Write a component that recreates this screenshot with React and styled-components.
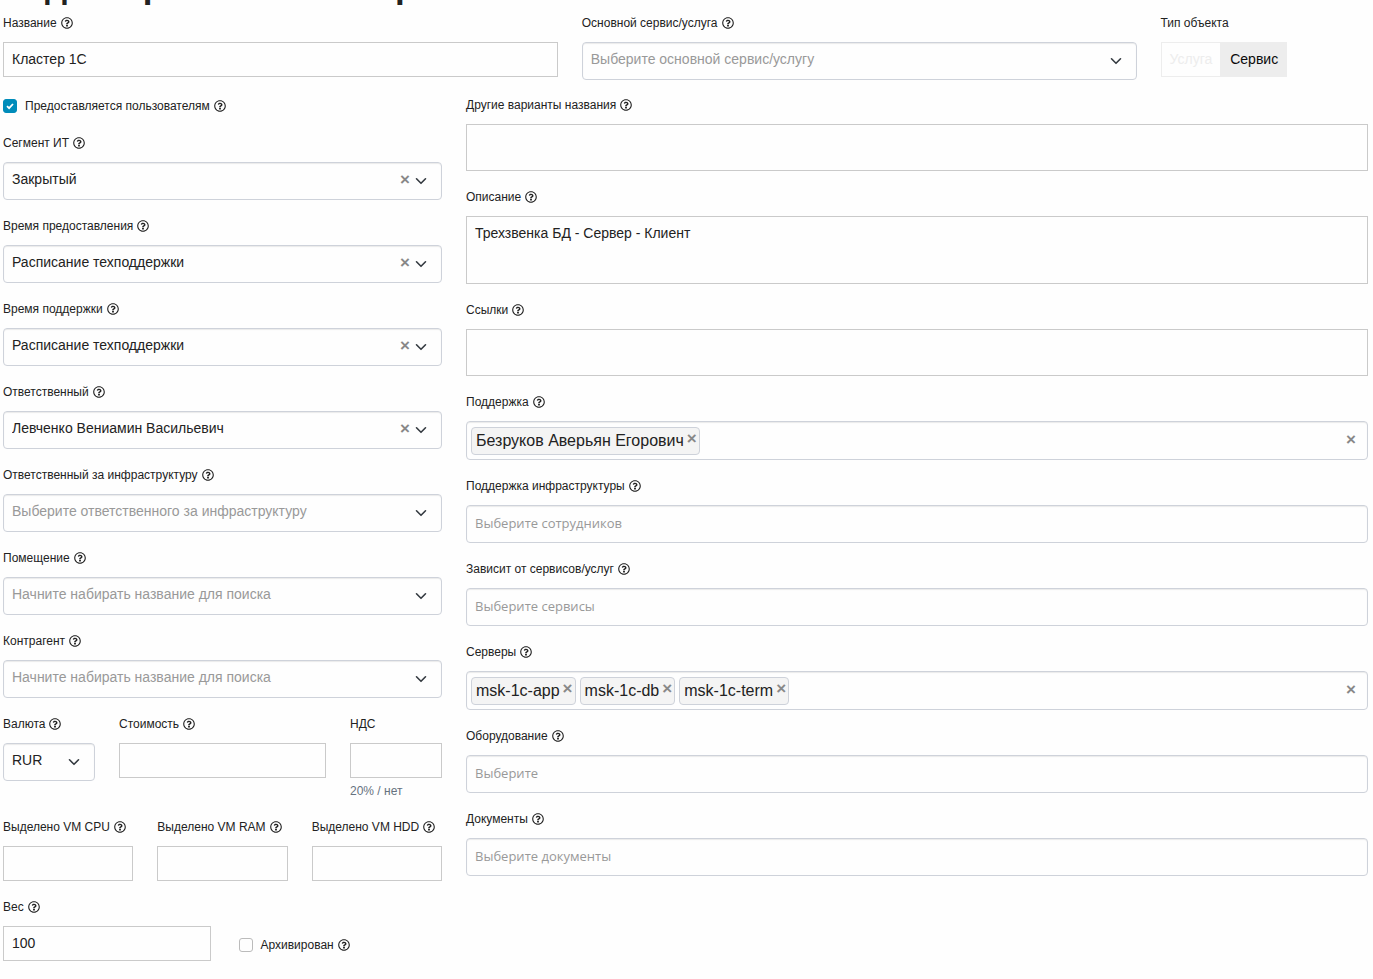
import React, { useId, useState } from "react";
import styled, { createGlobalStyle } from "styled-components";
import { FaRegQuestionCircle } from "react-icons/fa";

const GlobalStyle = createGlobalStyle`
  *, *::before, *::after {
    box-sizing: border-box;
  }
  body {
    margin: 0;
    background-color: #fefefe;
    color: #222;
    font-family: "Liberation Sans", Arial, sans-serif;
  }
  input, select, textarea, button {
    margin: 0;
    font-family: inherit;
    font-size: 14px;
    color: inherit;
  }
`;

const Page = styled.form`
  padding: 0 5px 0 3px;
  overflow: hidden;
`;

// Scrolled almost completely out of view
const Title = styled.h1`
  height: 36px;
  margin: -32px 0 10px;
  font-size: 35px;
  line-height: 36px;
  font-weight: 700;
  white-space: nowrap;
`;

//Grid
const Row = styled.div`
  display: grid;
  grid-template-columns: repeat(12, minmax(0, 1fr));
  column-gap: 24px;
  align-items: start;
  & + & {
    margin-top: 16px;
  }
`;

const Column = styled.div`
  grid-column: span ${(props) => props.$span};
  display: flex;
  flex-direction: column;
  gap: 17px;
`;

const Group = styled.div`
  display: grid;
  grid-template-columns: ${(props) => props.$columns};
  column-gap: 24px;
  align-items: start;
`;

//Field
const FieldBox = styled.div`
  display: flex;
  flex-direction: column;
  min-width: 0;
`;

const Caption = styled.div`
  display: flex;
  align-items: center;
  gap: 4px;
  height: 18px;
  margin-bottom: 10px;
  font-size: 12px;
  line-height: 18px;
  white-space: nowrap;
`;

const HelpIcon = styled(FaRegQuestionCircle)`
  flex: none;
  width: 12px;
  height: 12px;
`;

const Hint = styled.div`
  margin-top: 4px;
  font-size: 12px;
  line-height: 19px;
  color: #66727f;
`;

//Controls
const TextInput = styled.input`
  width: 100%;
  height: 35px;
  padding: 0 8px 2px;
  border: 1px solid #cacaca;
  background-color: #fefefe;
`;

const TextArea = styled.textarea`
  display: block;
  width: 100%;
  height: ${(props) => (props.$tall ? 68 : 47)}px;
  padding: 8px;
  border: 1px solid #cacaca;
  background-color: #fefefe;
  line-height: 16px;
  resize: none;
`;

const SelectBox = styled.div`
  position: relative;
`;

const NativeSelect = styled.select`
  display: block;
  appearance: none;
  width: 100%;
  height: 38px;
  padding: 0 50px 4px 8px;
  border: 1px solid #ced2da;
  border-radius: 4px;
  background-color: #fefefe;
  box-shadow: inset 0 1px 1px rgba(0, 0, 0, 0.08);
  color: ${(props) => (props.$empty ? "#999" : "inherit")};
`;

const Actions = styled.div`
  position: absolute;
  top: 0;
  right: 15px;
  height: 100%;
  display: flex;
  align-items: center;
  gap: 4px;
  pointer-events: none;
`;

const Chevron = styled.svg`
  width: 12px;
  height: 8px;
  fill: none;
  stroke: #343a40;
  stroke-width: 1.6;
  stroke-linecap: round;
  stroke-linejoin: round;
`;

const ClearButton = styled.button`
  width: 12px;
  height: 20px;
  padding: 0 0 ${(props) => (props.$raised ? 4 : 2)}px;
  border: 0;
  background: none;
  color: #888;
  font-size: 17px;
  line-height: 16px;
  font-weight: 700;
  text-align: center;
  pointer-events: auto;
  cursor: pointer;
`;

const MultiBox = styled.div`
  display: flex;
  align-items: center;
  gap: 4px;
  height: ${(props) => (props.$filled ? 39 : 38)}px;
  padding: 0 10px 0 ${(props) => (props.$filled ? 4 : 8)}px;
  border: 1px solid #ced2da;
  border-radius: 4px;
  background-color: #fefefe;
  box-shadow: inset 0 1px 1px rgba(0, 0, 0, 0.08);
`;

const MultiInput = styled.input`
  flex: 1;
  min-width: 0;
  height: 28px;
  padding: 0 0 2px;
  border: 0;
  outline: 0;
  background: none;
  font-family: "Open Sans", sans-serif;
  font-size: 13px;
  &::placeholder {
    color: #999;
    opacity: 1;
  }
`;

const Tag = styled.span`
  display: flex;
  align-items: center;
  gap: 2px;
  height: 28px;
  padding: 0 1px 0 4px;
  border: 1px solid #ced2da;
  border-radius: 4px;
  background-color: #f4f4f4;
  font-size: 16px;
  white-space: nowrap;
`;

const Check = styled.label`
  display: flex;
  align-items: center;
  gap: 4px;
  height: 20px;
  margin-bottom: 1px;
  font-size: 12px;
  white-space: nowrap;
`;

const CheckBox = styled.input`
  appearance: none;
  width: 14px;
  height: 14px;
  margin-right: 4px;
  border: 1px solid #bbb;
  border-radius: 3px;
  background: #fefefe center / 8px 8px no-repeat;
  &:checked {
    border-color: #008cba;
    background-color: #008cba;
    background-image: url("data:image/svg+xml,%3Csvg xmlns='http://www.w3.org/2000/svg' viewBox='0 0 8 8'%3E%3Cpath d='M1 4.2 3.1 6.2 7 2' fill='none' stroke='white' stroke-width='1.8'/%3E%3C/svg%3E");
  }
`;

const Archive = styled.div`
  display: flex;
  align-items: center;
  align-self: end;
  height: 35px;
  padding: 4px 0 0 4px;
`;

const Toggle = styled.div`
  display: flex;
`;

const ToggleButton = styled.button`
  height: 35px;
  padding: 0 8px 2px;
  border: 1px solid #ededed;
  background-color: ${(props) => (props.$active ? "#ededed" : "#fefefe")};
  color: ${(props) => (props.$active ? "#0a0a0a" : "#ededed")};
`;

const Label = ({ text, help = true, htmlFor }) => (
  <Caption>
    <label htmlFor={htmlFor}>{text}</label>
    {help && <HelpIcon />}
  </Caption>
);

const InputField = ({ label, value = "", help, hint }) => {
  const id = useId();
  return (
    <FieldBox>
      <Label text={label} help={help} htmlFor={id} />
      <TextInput id={id} type="text" defaultValue={value} />
      {hint && <Hint>{hint}</Hint>}
    </FieldBox>
  );
};

const AreaField = ({ label, value = "", tall }) => {
  const id = useId();
  return (
    <FieldBox>
      <Label text={label} htmlFor={id} />
      <TextArea id={id} defaultValue={value} $tall={tall} />
    </FieldBox>
  );
};

const SelectField = ({ label, value = "", placeholder, clearable }) => {
  const id = useId();
  const [current, setCurrent] = useState(value);
  return (
    <FieldBox>
      <Label text={label} htmlFor={id} />
      <SelectBox>
        <NativeSelect
          id={id}
          value={current}
          $empty={!current}
          onChange={(e) => setCurrent(e.target.value)}
        >
          {!value || clearable ? <option value="">{placeholder}</option> : null}
          {value && <option value={value}>{value}</option>}
        </NativeSelect>
        <Actions>
          {clearable && current && (
            <ClearButton type="button" onClick={() => setCurrent("")}>
              ×
            </ClearButton>
          )}
          <Chevron viewBox="0 0 12 8">
            <path d="M1.5 1.8 6 6.3 10.5 1.8" />
          </Chevron>
        </Actions>
      </SelectBox>
    </FieldBox>
  );
};

const MultiField = ({ label, items = [], placeholder }) => {
  const id = useId();
  const [tags, setTags] = useState(items);
  return (
    <FieldBox>
      <Label text={label} htmlFor={id} />
      <MultiBox $filled={tags.length > 0}>
        {tags.map((tag) => (
          <Tag key={tag}>
            {tag}
            <ClearButton
              type="button"
              $raised
              onClick={() => setTags(tags.filter((item) => item !== tag))}
            >
              ×
            </ClearButton>
          </Tag>
        ))}
        <MultiInput
          id={id}
          type="text"
          placeholder={tags.length ? undefined : placeholder}
        />
        {tags.length > 0 && (
          <ClearButton type="button" onClick={() => setTags([])}>
            ×
          </ClearButton>
        )}
      </MultiBox>
    </FieldBox>
  );
};

const CheckField = ({ label, checked }) => (
  <Check>
    <CheckBox type="checkbox" defaultChecked={checked} />
    {label}
    <HelpIcon />
  </Check>
);

const TypeField = () => {
  const [type, setType] = useState("Сервис");
  return (
    <FieldBox role="group" aria-labelledby="object-type">
      <Caption id="object-type">Тип объекта</Caption>
      <Toggle>
        {["Услуга", "Сервис"].map((name) => (
          <ToggleButton
            key={name}
            type="button"
            $active={type === name}
            onClick={() => setType(name)}
          >
            {name}
          </ToggleButton>
        ))}
      </Toggle>
    </FieldBox>
  );
};

export default function App() {
  return (
    <>
      <GlobalStyle />
      <Page>
        <Title>Редактирование ИТ-сервиса</Title>
        <Row>
          <Column $span={5}>
            <InputField label="Название" value="Кластер 1С" />
          </Column>
          <Column $span={5}>
            <SelectField
              label="Основной сервис/услуга"
              placeholder="Выберите основной сервис/услугу"
            />
          </Column>
          <Column $span={2}>
            <TypeField />
          </Column>
        </Row>
        <Row>
          <Column $span={4}>
            <CheckField label="Предоставляется пользователям" checked />
            <SelectField label="Сегмент ИТ" value="Закрытый" clearable />
            <SelectField
              label="Время предоставления"
              value="Расписание техподдержки"
              clearable
            />
            <SelectField
              label="Время поддержки"
              value="Расписание техподдержки"
              clearable
            />
            <SelectField
              label="Ответственный"
              value="Левченко Вениамин Васильевич"
              clearable
            />
            <SelectField
              label="Ответственный за инфраструктуру"
              placeholder="Выберите ответственного за инфраструктуру"
            />
            <SelectField
              label="Помещение"
              placeholder="Начните набирать название для поиска"
            />
            <SelectField
              label="Контрагент"
              placeholder="Начните набирать название для поиска"
            />
            <Group $columns="92px minmax(0, 1fr) 92px">
              <SelectField label="Валюта" value="RUR" />
              <InputField label="Стоимость" />
              <InputField label="НДС" help={false} hint="20% / нет" />
            </Group>
            <Group $columns="repeat(3, minmax(0, 1fr))">
              <InputField label="Выделено VM CPU" />
              <InputField label="Выделено VM RAM" />
              <InputField label="Выделено VM HDD" />
            </Group>
            <Group $columns="repeat(2, minmax(0, 1fr))">
              <InputField label="Вес" value="100" />
              <Archive>
                <CheckField label="Архивирован" />
              </Archive>
            </Group>
          </Column>
          <Column $span={8}>
            <AreaField label="Другие варианты названия" />
            <AreaField
              label="Описание"
              value="Трехзвенка БД - Сервер - Клиент"
              tall
            />
            <AreaField label="Ссылки" />
            <MultiField
              label="Поддержка"
              items={["Безруков Аверьян Егорович"]}
            />
            <MultiField
              label="Поддержка инфраструктуры"
              placeholder="Выберите сотрудников"
            />
            <MultiField
              label="Зависит от сервисов/услуг"
              placeholder="Выберите сервисы"
            />
            <MultiField
              label="Серверы"
              items={["msk-1c-app", "msk-1c-db", "msk-1c-term"]}
            />
            <MultiField label="Оборудование" placeholder="Выберите" />
            <MultiField
              label="Документы"
              placeholder="Выберите документы"
            />
          </Column>
        </Row>
      </Page>
    </>
  );
}
